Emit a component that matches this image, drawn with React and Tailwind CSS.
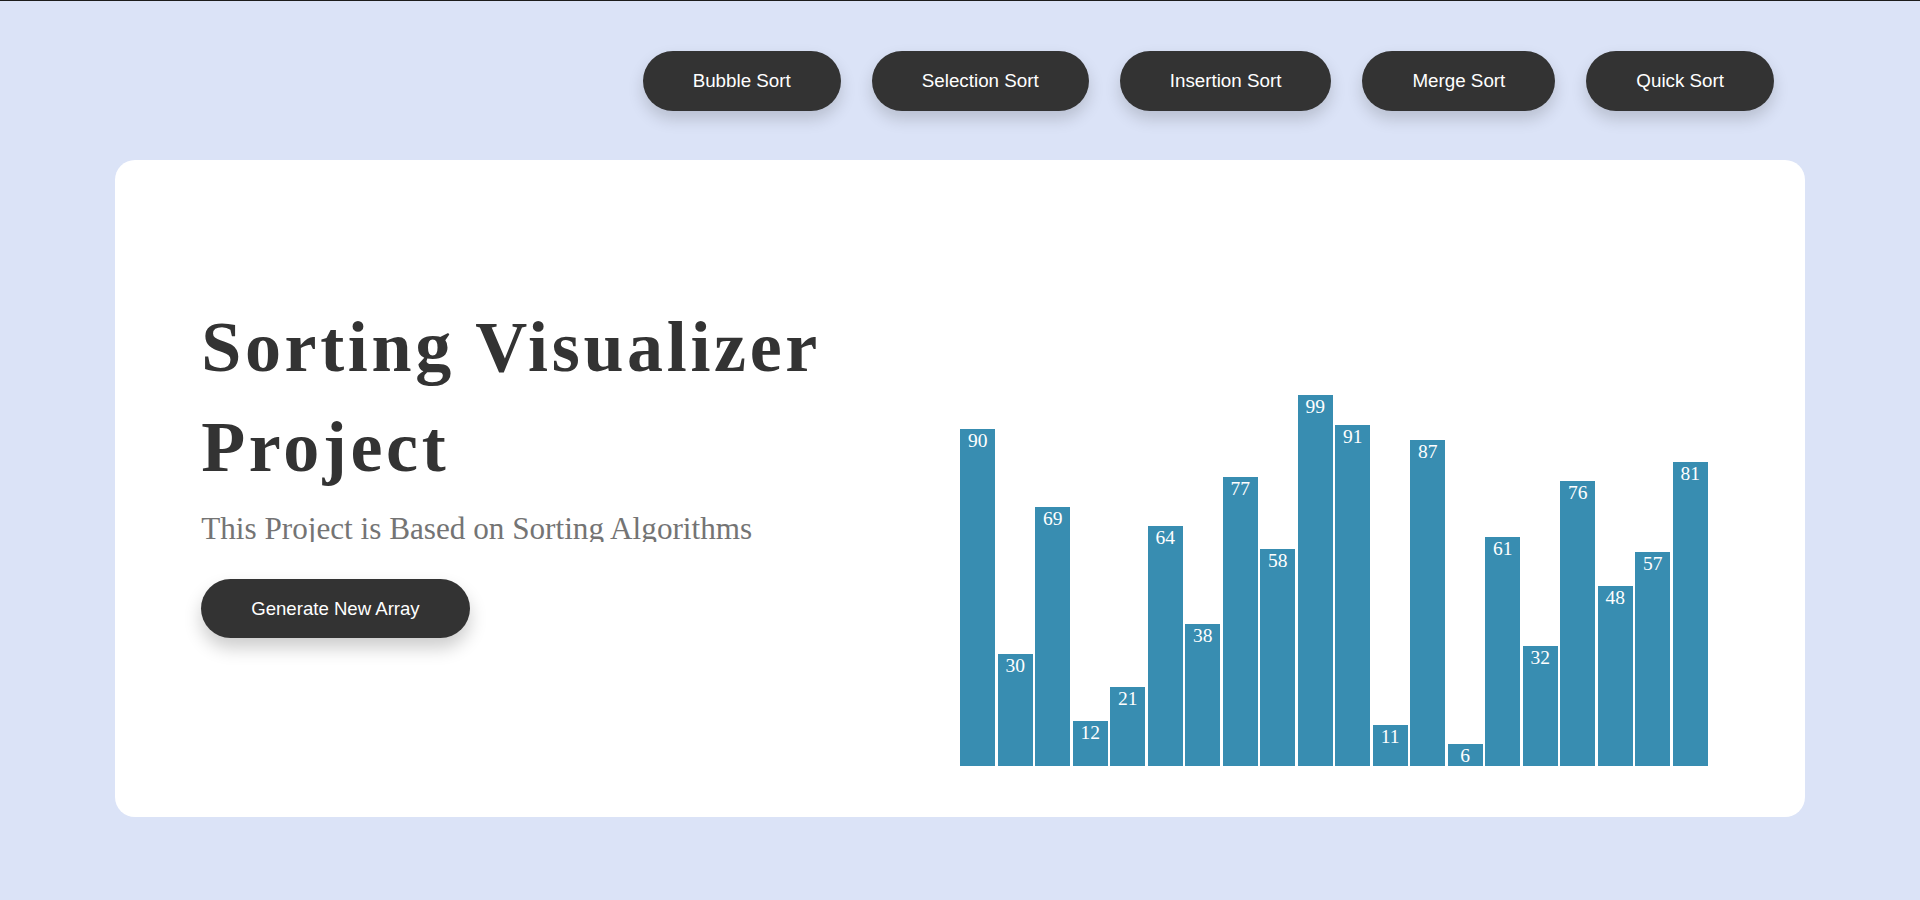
import React from "react";

const values = [90, 30, 69, 12, 21, 64, 38, 77, 58, 99, 91, 11, 87, 6, 61, 32, 76, 48, 57, 81];
const navItems = ["Bubble Sort", "Selection Sort", "Insertion Sort", "Merge Sort", "Quick Sort"];

export default function App() {
  return (
    <div className="min-h-[900px] w-full bg-[#dbe3f7]" style={{ fontFamily: "'Liberation Sans', Arial, sans-serif" }}>
      <div className="h-px w-full bg-[#1c1c1c]" />
      <nav className="flex justify-end gap-[31px] pr-[146px] pt-[50px]">
        {navItems.map((n) => (
          <button
            key={n}
            className="h-[60px] rounded-full bg-[#333333] px-[50px] text-[18.8px] text-white shadow-[0_8px_16px_rgba(0,0,0,0.16)]"
          >
            {n}
          </button>
        ))}
      </nav>
      <main className="mx-auto mt-[49px] flex h-[657px] w-[88%] rounded-[20px] bg-white pl-[86px]">
        <section className="mt-[137px] w-[759px] shrink-0" style={{ fontFamily: "'Liberation Serif', 'Times New Roman', serif" }}>
          <h1 className="w-[700px] text-[72px] font-bold leading-[100px] tracking-[3.65px] text-[#333333]">
            Sorting Visualizer Project
          </h1>
          <p className="mt-[14px] h-[31px] overflow-hidden text-[31.2px] leading-[35px] text-[#747474]">
            This Project is Based on Sorting Algorithms
          </p>
          <button
            className="mt-[37px] h-[59px] rounded-full bg-[#333333] px-[50px] text-[18.6px] text-white shadow-[0_10px_18px_rgba(0,0,0,0.2)]"
            style={{ fontFamily: "'Liberation Sans', Arial, sans-serif" }}
          >
            Generate New Array
          </button>
        </section>
        <section className="mb-[51px] flex items-end gap-[2.5px] self-end">
          {values.map((v, i) => (
            <div
              key={i}
              className="flex w-[35px] justify-center bg-[#388db1] pt-px text-[19.5px] leading-[21px] text-white"
              style={{ height: `${v * 3.75}px`, fontFamily: "'Liberation Serif', 'Times New Roman', serif" }}
            >
              {v}
            </div>
          ))}
        </section>
      </main>
    </div>
  );
}
